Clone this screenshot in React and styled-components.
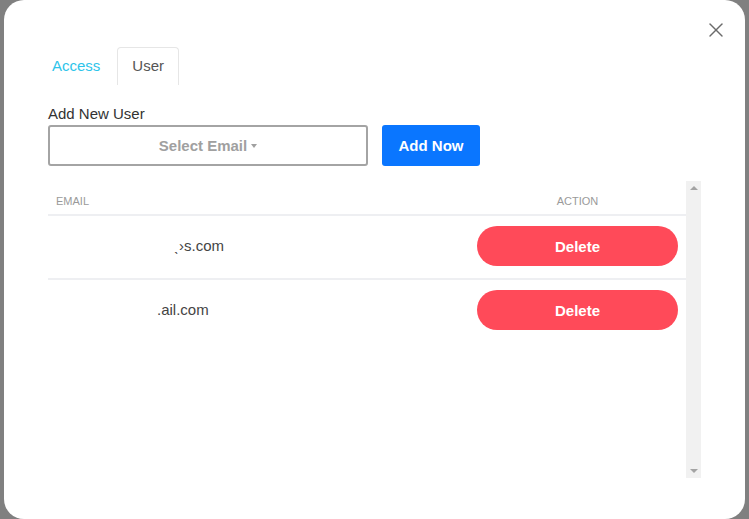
import React from 'react';
import styled, { createGlobalStyle } from 'styled-components';
import { X } from 'lucide-react';

const GlobalStyle = createGlobalStyle`
  html, body {
    margin: 0;
    padding: 0;
    background: #808080;
    font-family: 'Liberation Sans', Arial, sans-serif;
    overflow: hidden;
  }
`;

// the dialog sits on the dimmed page
const Modal = styled.div`
  position: relative;
  box-sizing: border-box;
  width: 741px;
  height: 519px;
  margin-left: 4px;
  padding: 47px 44px 41px;
  background: #fff;
  border-radius: 20px;
  display: flex;
  flex-direction: column;
`;

const CloseButton = styled.button`
  position: absolute;
  top: 18px;
  right: 17px;
  width: 24px;
  height: 24px;
  padding: 0;
  border: none;
  background: none;
  color: #6b6b6b;
  display: flex;
  align-items: center;
  justify-content: center;
`;

const Tabs = styled.div`
  display: flex;
  gap: 2px;
  margin-left: -11px;
`;

const Tab = styled.div`
  box-sizing: border-box;
  height: 38px;
  padding: 0 14px 2px;
  display: flex;
  align-items: center;
  font-size: 15px;
  color: ${({ active }) => (active ? '#555' : '#2ec4ea')};
  border: 1px solid ${({ active }) => (active ? '#e6e6e6' : 'transparent')};
  border-bottom: none;
  border-radius: 4px 4px 0 0;
`;

const Label = styled.div`
  margin-top: 20px;
  font-size: 15px;
  line-height: 17px;
  color: #333;
`;

const FormRow = styled.div`
  display: flex;
  gap: 14px;
  margin-top: 3px;
`;

const Select = styled.div`
  box-sizing: border-box;
  width: 320px;
  height: 41px;
  border: 2px solid #a4a4a4;
  border-radius: 3px;
  display: flex;
  align-items: center;
  justify-content: center;
  gap: 4px;
  font-size: 15px;
  font-weight: bold;
  color: #a0a0a0;
`;

const Caret = styled.span`
  width: 0;
  height: 0;
  border-left: 3.5px solid transparent;
  border-right: 3.5px solid transparent;
  border-top: 4px solid #a0a0a0;
  margin-top: 1px;
`;

const PrimaryButton = styled.button`
  box-sizing: border-box;
  width: 98px;
  height: 41px;
  border: none;
  border-radius: 3px;
  background: #0a76ff;
  color: #fff;
  font-family: inherit;
  font-size: 15px;
  font-weight: bold;
`;

const TableArea = styled.div`
  margin-top: 15px;
  flex: 1;
  display: flex;
  min-height: 0;
`;

const TableScroll = styled.div`
  flex: 1;
  overflow: hidden;
`;

const Scrollbar = styled.div`
  width: 15px;
  background: #f1f1f1;
  display: flex;
  flex-direction: column;
  justify-content: space-between;
  align-items: center;
  padding: 5px 0;
  box-sizing: border-box;
`;

const Arrow = styled.span`
  width: 0;
  height: 0;
  border-left: 4px solid transparent;
  border-right: 4px solid transparent;
  ${({ down }) =>
    down ? 'border-top: 4px solid #a3a3a3;' : 'border-bottom: 4px solid #a3a3a3;'}
`;

const Table = styled.table`
  width: 100%;
  border-collapse: collapse;
`;

const Th = styled.th`
  height: 27px;
  padding: 6px 8px 0;
  font-size: 11px;
  font-weight: normal;
  color: #9a9a9a;
  text-transform: uppercase;
  text-align: ${({ align }) => align || 'left'};
  border-bottom: 2px solid #eeeff2;
  width: ${({ w }) => w || 'auto'};
`;

const Td = styled.td`
  padding: 10px 8px 12px;
  font-size: 15px;
  line-height: 17px;
  color: #444;
  vertical-align: middle;
  text-align: ${({ align }) => align || 'left'};
  border-bottom: ${({ last }) => (last ? 'none' : '2px solid #eeeff2')};
`;

const Email = styled.div`
  padding-left: ${({ offset }) => offset}px;
  margin-top: -1px;
`;

const DeleteButton = styled.button`
  display: block;
  margin: 0 auto;
  width: 201px;
  height: 40px;
  border: none;
  border-radius: 20px;
  background: #ff4a59;
  color: #fff;
  font-family: inherit;
  font-size: 15px;
  font-weight: bold;
`;

const users = [
  { email: '\u02CE\u203As.com', offset: 118 },
  { email: '.ail.com', offset: 101 },
];

export default function App() {
  return (
    <>
      <GlobalStyle />
      <Modal>
        <CloseButton aria-label="Close">
          <X size={24} strokeWidth={1.4} />
        </CloseButton>
        <Tabs>
          <Tab>Access</Tab>
          <Tab active>User</Tab>
        </Tabs>
        <Label>Add New User</Label>
        <FormRow>
          <Select>
            Select Email
            <Caret />
          </Select>
          <PrimaryButton type="button">Add Now</PrimaryButton>
        </FormRow>
        <TableArea>
          <TableScroll>
            <Table>
              <thead>
                <tr>
                  <Th>Email</Th>
                  <Th align="center" w="201px">Action</Th>
                </tr>
              </thead>
              <tbody>
                {users.map((user, idx) => (
                  <tr key={user.email}>
                    <Td last={idx === users.length - 1}>
                      <Email offset={user.offset}>{user.email}</Email>
                    </Td>
                    <Td align="center" last={idx === users.length - 1}>
                      <DeleteButton type="button">Delete</DeleteButton>
                    </Td>
                  </tr>
                ))}
              </tbody>
            </Table>
          </TableScroll>
          <Scrollbar>
            <Arrow />
            <Arrow down />
          </Scrollbar>
        </TableArea>
      </Modal>
    </>
  );
}
